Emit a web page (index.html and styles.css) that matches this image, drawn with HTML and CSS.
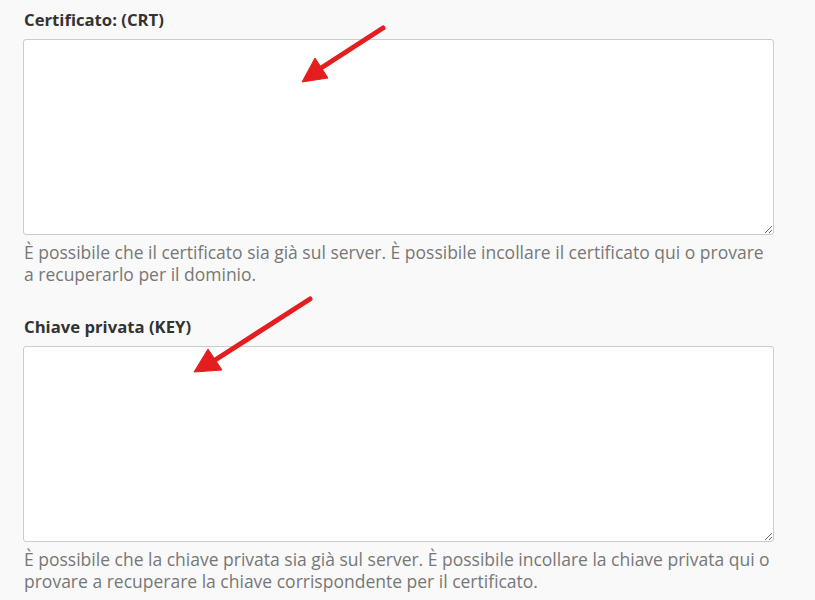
FILE: index.html
```html
<!DOCTYPE html>
<html lang="it">
<head>
<meta charset="utf-8">
<title>Certificato</title>
<link rel="stylesheet" href="styles.css">
</head>
<body>
<div class="page">
  <div class="field">
    <label class="label" for="crt">Certificato: (CRT)</label>
    <textarea id="crt" class="box"></textarea>
    <p class="help">È possibile che il certificato sia già sul server. È possibile incollare il certificato qui o provare a recuperarlo per il dominio.</p>
  </div>
  <div class="field">
    <label class="label" for="key">Chiave privata (KEY)</label>
    <textarea id="key" class="box"></textarea>
    <p class="help">È possibile che la chiave privata sia già sul server. È possibile incollare la chiave privata qui o provare a recuperare la chiave corrispondente per il certificato.</p>
  </div>
  <svg class="arrows" width="815" height="600" viewBox="0 0 815 600">
    <g fill="#e41e1e" stroke="#e41e1e">
      <line x1="383" y1="28" x2="318" y2="70" stroke-width="5" stroke-linecap="round"/>
      <polygon points="302,82 315,58 328,78" stroke-width="1" stroke-linejoin="round"/>
      <line x1="310" y1="299" x2="212" y2="362" stroke-width="5" stroke-linecap="round"/>
      <polygon points="194,372 208,349 222,370" stroke-width="1" stroke-linejoin="round"/>
    </g>
  </svg>
</div>
</body>
</html>
```
FILE: styles.css
```css
html, body {
  margin: 0;
  padding: 0;
  background: #f9f9f9;
}
.page {
  position: relative;
  width: 815px;
  height: 600px;
  overflow: hidden;
  padding: 8px 0 0 23px;
  box-sizing: border-box;
  font-family: "Open Sans", "Liberation Sans", sans-serif;
}
.field {
  display: flex;
  flex-direction: column;
  margin-bottom: 30px;
}
.label {
  font-size: 16.7px;
  font-weight: 700;
  color: #333;
  line-height: 24px;
  margin: 0 0 7px 1px;
}
.box {
  width: 751px;
  height: 196px;
  box-sizing: border-box;
  border: 1px solid #cccccc;
  border-radius: 3px;
  background: #fff;
  resize: vertical;
  margin: 0;
  padding: 6px;
}
.help {
  margin: 6px 0 0 1px;
  font-size: 17.5px;
  line-height: 22px;
  color: #777;
  width: 748px;
}
.arrows {
  position: absolute;
  left: 0;
  top: 0;
  pointer-events: none;
}
```
